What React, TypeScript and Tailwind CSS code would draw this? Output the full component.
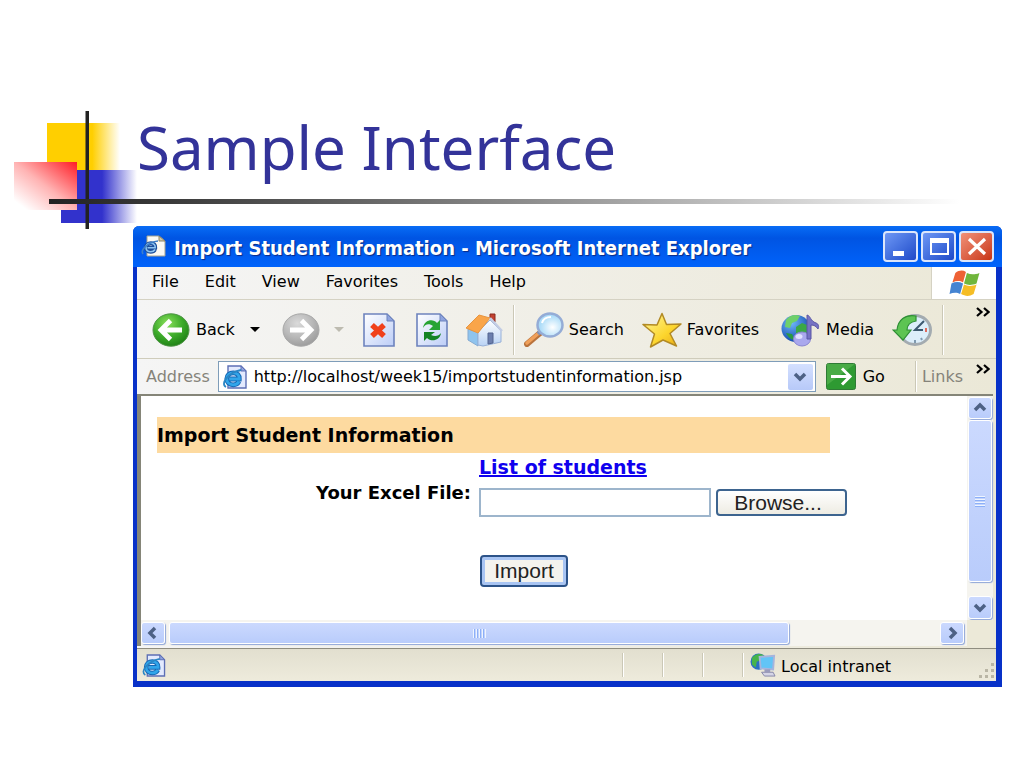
import React from 'react';

function PageIcon({ className }: { className: string }) {
  return (
    <svg viewBox="0 0 26 24" className={className} aria-hidden="true">
      <path d="M6 1h13l5 5v17H6z" fill="#e3eafe" stroke="#5d6fb5" strokeWidth="1.400" />
      <path d="M19 1v5h5z" fill="#8fa4df" stroke="#5d6fb5" />
      <path d="M17 16.500c-1.200 2.300-3.200 3.300-5.800 3.300-4 0-6.400-2.500-6.400-6s2.700-6 6.500-6 6.200 2.500 6 6.200H7.500" fill="none" stroke="#1668b4" strokeWidth="4.800" />
      <path d="M17 16.500c-1.200 2.300-3.200 3.300-5.800 3.300-4 0-6.400-2.500-6.400-6s2.700-6 6.500-6 6.200 2.500 6 6.200H7.500" fill="none" stroke="#31a5ea" strokeWidth="2.800" />
      <path d="M4 22C-2 19 6 7.500 19 5" fill="none" stroke="#2b86c4" strokeWidth="1.800" />
    </svg>
  );
}

function WindowIcon() {
  return (
    <svg viewBox="0 0 26 24" className="h-[24px] w-[26px]" aria-hidden="true">
      <path d="M6 1h12l6 5v15H6z" fill="#fbfaf4" stroke="#a7a48f" />
      <path d="M18 1v5h6z" fill="#d3c8a4" stroke="#8c8569" />
      <path d="M14 14.500c-1 1.700-2.600 2.300-4.400 2.300-2.900 0-4.600-1.700-4.600-4.200s2-4.300 4.900-4.300 4.600 1.700 4.300 4.500H6.500" fill="none" stroke="#1c4f9c" strokeWidth="4" />
      <path d="M14 14.500c-1 1.700-2.600 2.300-4.400 2.300-2.900 0-4.600-1.700-4.600-4.200s2-4.300 4.900-4.300 4.600 1.700 4.300 4.500H6.500" fill="none" stroke="#8cc4f2" strokeWidth="1.600" />
      <path d="M2 19C-1 15 7 7 17 6" fill="none" stroke="#3d7fc8" strokeWidth="1.600" />
    </svg>
  );
}

function Circle({ dir }: { dir: 'back' | 'forward' }) {
  const back = dir === 'back';
  return (
    <svg viewBox="0 0 38 34" className="h-[34px] w-[38px]" aria-hidden="true" preserveAspectRatio="none">
      <defs>
        <radialGradient id={back ? 'gb' : 'gf'} cx="40%" cy="30%" r="75%">
          <stop offset="0" stopColor={back ? '#8be05c' : '#dadada'} />
          <stop offset=".55" stopColor={back ? '#3cab2a' : '#b9b9b9'} />
          <stop offset="1" stopColor={back ? '#1d7d14' : '#999'} />
        </radialGradient>
      </defs>
      <ellipse cx="19" cy="17" rx="18" ry="16.200" fill={back ? 'url(#gb)' : 'url(#gf)'} stroke={back ? '#4f9446' : '#a8a8a8'} />
      <path d={back ? 'M18.500 7.500L9 17l9.500 9.500M10 17h20' : 'M19.500 7.500L29 17l-9.500 9.500M28 17H8'} fill="none" stroke="#fff" strokeWidth="4.800" />
    </svg>
  );
}

function Sheet({ children }: { children: React.ReactNode }) {
  return (
    <svg viewBox="0 0 32 34" className="h-[34px] w-[32px]" aria-hidden="true">
      <defs>
        <linearGradient id="sheet" x1="0" y1="0" x2="1" y2="1">
          <stop offset="0" stopColor="#fff" />
          <stop offset="1" stopColor="#bccdf7" />
        </linearGradient>
      </defs>
      <path d="M1 1h23l7 7v25H1z" fill="url(#sheet)" stroke="#6d83bd" strokeWidth="1.600" />
      <path d="M24 1v7h7z" fill="#8fa4df" stroke="#6d83bd" />
      {children}
    </svg>
  );
}

function HomeIcon() {
  return (
    <svg viewBox="0 0 38 35" className="h-[35px] w-[38px]" aria-hidden="true">
      <defs>
        <linearGradient id="wall" x1="0" y1="0" x2="0" y2="1">
          <stop offset="0" stopColor="#fff" />
          <stop offset="1" stopColor="#b9d3f5" />
        </linearGradient>
      </defs>
      <path d="M3 17l10 3v14L3 28z" fill="#8fc4ee" stroke="#86abd2" />
      <path d="M13 20l12-12 11 11v11l-18 4-5-1z" fill="url(#wall)" stroke="#98b1d8" />
      <path d="M25 2h5v8l-5-3z" fill="#c2412f" stroke="#8a2a20" />
      <path d="M1 16L14 3l11 3-12 15z" fill="#f9a54a" stroke="#e8953f" />
      <path d="M25 6l12 13" stroke="#c3cde4" strokeWidth="2.500" />
      <path d="M23 21h5v10l-5 1z" fill="#6c7fae" stroke="#53658f" />
    </svg>
  );
}

function SearchIcon() {
  return (
    <svg viewBox="0 0 40 35" className="h-[35px] w-[40px]" aria-hidden="true">
      <defs>
        <radialGradient id="lens" cx="60%" cy="60%">
          <stop offset="0" stopColor="#fff" />
          <stop offset="1" stopColor="#acdcf8" />
        </radialGradient>
      </defs>
      <path d="M3 32l13-11" stroke="#b9733c" strokeWidth="6" strokeLinecap="round" />
      <path d="M3 31l13-11" stroke="#f0a05a" strokeWidth="3.500" strokeLinecap="round" />
      <path d="M14 22l4-4" stroke="#8190b5" strokeWidth="4" />
      <ellipse cx="26" cy="13" rx="12.500" ry="11.500" fill="url(#lens)" stroke="#94acd6" strokeWidth="2.500" />
      <path d="M18 11c1-4 5-6 9-6" stroke="#fff" strokeWidth="2" fill="none" />
    </svg>
  );
}

function StarIcon() {
  return (
    <svg viewBox="0 0 40 36" className="h-[36px] w-[40px]" aria-hidden="true">
      <defs>
        <linearGradient id="star" x1="0" y1="0" x2="1" y2="1">
          <stop offset="0" stopColor="#fff8a0" />
          <stop offset=".6" stopColor="#fcd52d" />
          <stop offset="1" stopColor="#e6a514" />
        </linearGradient>
      </defs>
      <path d="M20 1.500l4.500 11 14.500-.5-11 9.500 6.500 12.500-13.500-6-12.500 7 4-13L1 12.500l14 .5z" fill="url(#star)" stroke="#b28a24" strokeWidth="1.500" strokeLinejoin="round" />
    </svg>
  );
}

function MediaIcon() {
  return (
    <svg viewBox="0 0 40 34" className="h-[34px] w-[40px]" aria-hidden="true">
      <defs>
        <radialGradient id="globe" cx="35%" cy="30%" r="75%">
          <stop offset="0" stopColor="#6fb7fa" />
          <stop offset="1" stopColor="#0c43a8" />
        </radialGradient>
      </defs>
      <ellipse cx="15" cy="15.500" rx="14.500" ry="13.500" fill="url(#globe)" />
      <path d="M5 7c4-5 9-6 14-4l-3 5-5 2-2 5-5-1z" fill="#6fd06a" />
      <path d="M15 14l6-4 5 2v9l-6 3-5-4z" fill="#3aa846" />
      <path d="M5 20l6 1 3 6c-4 0-7-3-9-7z" fill="#2a9a40" />
      <ellipse cx="21" cy="26" rx="8.500" ry="7" fill="#aaa8ed" stroke="#8a87d0" />
      <ellipse cx="18" cy="23.500" rx="3.500" ry="2.500" fill="#e1e0ff" />
      <path d="M26 26V2c4 1 3 6 9 8 3 1 3 4 2 6-2-3-4-4-7-4v14z" fill="#7773c4" stroke="#5a56a6" />
    </svg>
  );
}

function HistoryIcon() {
  return (
    <svg viewBox="0 0 40 34" className="h-[34px] w-[40px]" aria-hidden="true">
      <ellipse cx="23" cy="17" rx="15.500" ry="14.500" fill="#dceefa" stroke="#a3abb0" strokeWidth="3" />
      <path d="M32 8l-9 9h8" fill="none" stroke="#3c5970" strokeWidth="2" />
      <path d="M34 15v4" stroke="#e06a5c" strokeWidth="2" />
      <path d="M23 27v3M29 25l1 2" stroke="#7f9ab0" strokeWidth="2" />
      <path d="M24 3C13 1 6 7 5 17H1l10 10 8-10h-4c0-5 3-8 9-9z" fill="#5dc453" stroke="#2e8e35" strokeWidth="1.200" />
    </svg>
  );
}

function Flag() {
  return (
    <svg viewBox="0 0 34 28" className="h-[27px] w-[34px]" aria-hidden="true">
      <path d="M8 3c4-3 8-3 11-1l-3 11c-3-2-7-2-11 0z" fill="#ee6135" />
      <path d="M20 3c4 2 8 2 13 0l-3 11c-5 2-9 2-13 0z" fill="#70b63c" />
      <path d="M4 14c4-2 8-2 12 0l-3 11c-3-2-7-2-11 0z" fill="#4584d2" />
      <path d="M17 15c4 2 8 2 13 0l-3 10c-5 3-9 2-13 0z" fill="#f5bd25" />
    </svg>
  );
}

function IntranetIcon() {
  return (
    <svg viewBox="0 0 28 26" className="h-[25px] w-[27px] shrink-0" aria-hidden="true">
      <circle cx="9" cy="9" r="8.500" fill="#2a6fc4" />
      <path d="M2 5c3-4 8-5 12-3l-2 5-5 2-1 6-4-3z" fill="#46b44b" />
      <path d="M10 4l15-1-1 14-13-1z" fill="#62c4f6" stroke="#a6b4dc" strokeWidth="2" />
      <path d="M12 20h12l2 4H15z" fill="#d5d5e6" stroke="#8586a8" />
      <path d="M15 17h6v3h-6z" fill="#9a9bbb" />
    </svg>
  );
}

function Chevron({ d }: { d: string }) {
  return (
    <svg viewBox="0 0 16 16" className="h-4 w-4" aria-hidden="true">
      <path d={d} fill="none" stroke="#4d6185" strokeWidth="3.500" />
    </svg>
  );
}

function More() {
  return (
    <svg viewBox="0 0 14 10" className="h-[10px] w-[14px]" aria-hidden="true">
      <path d="M1 1l4.500 4L1 9M8 1l4.500 4L8 9" fill="none" stroke="#000" strokeWidth="2.200" />
    </svg>
  );
}

const scrollPart =
  'flex items-center justify-center rounded-[3px] border border-white bg-linear-to-b from-[#cbd9fe] to-[#b9ccfb] shadow-[1px_1px_1px_#8fa6d8]';
const caption = 'flex h-[31px] w-[35px] items-center justify-center rounded-[4px] border-2 border-[#dbe6fb]';

function Divider() {
  return <div className="h-6 w-[2px] border-l border-[#cbc8b6] bg-white" />;
}

function Header() {
  return (
    <header className="grid h-[226px]">
      <svg viewBox="0 0 140 230" className="col-start-1 row-start-1 h-[230px] w-[140px]" aria-hidden="true">
        <defs>
          <linearGradient id="yel"><stop offset=".62" stopColor="#ffcf00" /><stop offset="1" stopColor="#fff" /></linearGradient>
          <linearGradient id="blu"><stop offset=".54" stopColor="#3232cc" /><stop offset="1" stopColor="#fff" /></linearGradient>
          <linearGradient id="red" x1="1" y1="0" x2="0" y2="1">
            <stop offset="0" stopColor="#ff1c25" /><stop offset=".5" stopColor="#ffb4b4" /><stop offset=".9" stopColor="#fff" />
          </linearGradient>
        </defs>
        <rect x="47" y="123" width="73" height="47" fill="url(#yel)" />
        <rect x="61" y="170" width="76" height="53" fill="url(#blu)" />
        <rect x="14" y="162" width="63" height="48" fill="url(#red)" />
        <rect x="85.500" y="111" width="3.500" height="118" fill="#222" />
      </svg>
      <div className="col-start-1 row-start-1 mr-16 mb-[26px] ml-[49px] h-[5px] self-end bg-linear-to-r from-[#222] to-white" />
      <h1 className="col-start-1 row-start-1 mb-[43px] self-end pl-[137px] font-['Noto_Sans',sans-serif] text-[60px] leading-[80px] font-normal text-[#333399]">
        Sample Interface
      </h1>
    </header>
  );
}

function TitleBar() {
  return (
    <div className="-mr-[6px] -ml-1 flex h-[41px] items-center gap-[7px] rounded-t-[6px] bg-linear-to-b from-[#0a6cf5] via-[#0054e3] via-30% to-[#0063fb] pr-2 pl-2">
      <WindowIcon />
      <h2 className="grow pt-[3px] font-['DejaVu_Sans_Condensed','DejaVu_Sans',sans-serif] text-[20px] font-bold whitespace-nowrap text-white [text-shadow:1px_1px_1px_#0a2a85]">
        Import Student Information - Microsoft Internet Explorer
      </h2>
      <div className="flex gap-[3px]">
        <button aria-label="Minimize" className={caption + ' bg-linear-to-br from-[#6e97f5] to-[#1f48c8]'}>
          <svg viewBox="0 0 30 27" className="h-[27px] w-[30px]"><path d="M7 18h11v5H7z" fill="#fff" /></svg>
        </button>
        <button aria-label="Maximize" className={caption + ' bg-linear-to-br from-[#6e97f5] to-[#1f48c8]'}>
          <svg viewBox="0 0 30 27" className="h-[27px] w-[30px]"><path d="M7 7h17v14H7z" fill="none" stroke="#fff" strokeWidth="2" /><path d="M6 5h19v5H6z" fill="#fff" /></svg>
        </button>
        <button aria-label="Close" className={caption + ' bg-linear-to-br from-[#f09078] to-[#c8320f]'}>
          <svg viewBox="0 0 30 27" className="h-[27px] w-[30px]"><path d="M7 6l16 15M23 6L7 21" stroke="#fff" strokeWidth="3.200" /></svg>
        </button>
      </div>
    </div>
  );
}

function MenuBar() {
  return (
    <div className="flex h-[33px] border-b border-[#d5d2c3]">
      <nav className="flex grow items-start gap-[26px] pt-[3px] pl-[15px] leading-6">
        {['File', 'Edit', 'View', 'Favorites', 'Tools', 'Help'].map((m) => (
          <button key={m}>{m}</button>
        ))}
      </nav>
      <div className="flex w-[65px] items-center justify-center border-l border-[#d5d2c3] bg-white"><Flag /></div>
    </div>
  );
}

function ToolBar() {
  return (
    <div className="flex h-[59px] items-center border-b border-[#cfccbb] pt-px pl-[15px]">
      <button className="flex items-center gap-[6px]"><Circle dir="back" />Back</button>
      <svg viewBox="0 0 10 5" className="ml-[15px] h-[5px] w-[10px]"><path d="M0 0h10L5 5z" /></svg>
      <button aria-label="Forward" className="ml-[22px]"><Circle dir="forward" /></button>
      <svg viewBox="0 0 10 5" className="ml-[14px] h-[5px] w-[10px]"><path d="M0 0h10L5 5z" fill="#bdbbb0" /></svg>
      <button aria-label="Stop" className="ml-[19px]">
        <Sheet><path d="M9 12l12 11M21 12L9 23" stroke="#f0401c" strokeWidth="5.500" /></Sheet>
      </button>
      <button aria-label="Refresh" className="ml-[21px]">
        <Sheet>
          <path d="M7 15C8 7 17 5 21 10l3-3v10H13l4-4c-4-3-8-2-10 2z" fill="#27a434" />
          <path d="M25 20c-1 8-10 9-14 5l-3 3V19h11l-4 3c4 2 8 1 10-2z" fill="#148324" />
        </Sheet>
      </button>
      <button aria-label="Home" className="ml-[17px]"><HomeIcon /></button>
      <div className="ml-[10px] h-[50px] w-[2px] border-l border-[#cbc8b6] bg-white" />
      <button className="ml-[9px] flex items-center gap-[5px]"><SearchIcon />Search</button>
      <button className="ml-[18px] flex items-center gap-[5px]"><StarIcon />Favorites</button>
      <button className="ml-[22px] flex items-center gap-[5px]"><MediaIcon />Media</button>
      <button aria-label="History" className="ml-[18px]"><HistoryIcon /></button>
      <div className="ml-[10px] h-[50px] w-[2px] border-l border-[#cbc8b6] bg-white" />
      <button aria-label="More tools" className="mt-[6px] mr-[6px] ml-auto self-start"><More /></button>
    </div>
  );
}

function AddressBar() {
  return (
    <div className="flex h-[35px] items-center pl-[9px]">
      <label htmlFor="address" className="text-[#85837a]">Address</label>
      <div className="ml-[8px] flex h-[31px] min-w-0 grow items-center border border-[#7f9db9] bg-white pl-[3px]">
        <PageIcon className="h-[24px] w-[26px] shrink-0" />
        <input id="address" className="ml-[6px] min-w-0 grow bg-white outline-none" defaultValue="http://localhost/week15/importstudentinformation.jsp" />
        <button aria-label="Show addresses" className="mr-[2px] flex h-[26px] w-[25px] items-center justify-center rounded-[2px] bg-linear-to-b from-[#d4e0ff] to-[#b7c9f8]">
          <Chevron d="M3 5l5 5 5-5" />
        </button>
      </div>
      <button className="ml-[10px] flex items-center gap-[7px]">
        <svg viewBox="0 0 30 27" className="h-[27px] w-[30px]" aria-hidden="true">
          <rect x=".5" y=".5" width="29" height="26" rx="2" fill="#2e9a32" stroke="#2f7a35" />
          <path d="M1 1h28L1 22z" fill="#64bb59" opacity=".5" />
          <path d="M5 13.500h18M16 5.500l8 8-8 8" fill="none" stroke="#fff" strokeWidth="3" />
        </svg>
        Go
      </button>
      <div className="ml-[30px] h-[31px] w-[2px] border-l border-[#cbc8b6] bg-white" />
      <span className="ml-[5px] text-[#85837a]">Links</span>
      <button aria-label="More links" className="mt-[5px] mr-[6px] ml-[13px] self-start"><More /></button>
    </div>
  );
}

function ImportForm() {
  return (
    <form className="min-w-0 grow bg-white pt-[21px] pl-[16px] font-['DejaVu_Sans',sans-serif] text-[19px] font-bold">
      <h3 className="mr-[137px] h-[36px] bg-[#fddaa0] leading-[36px]">Import Student Information</h3>
      <div className="grid grid-cols-[314px_auto] items-start gap-x-[8px]">
        <a href="#students" className="col-start-2 h-[35px] justify-self-start leading-7 text-[#0f00ee] underline decoration-2">List of students</a>
        <label htmlFor="file" className="col-start-1 text-right text-[18px] leading-[10px]">Your Excel File:</label>
        <div className="flex items-center gap-[5px]">
          <input id="file" type="text" className="h-[29px] w-[232px] border-2 border-[#9db5cc] bg-white px-1 text-[16px] font-normal outline-none" />
          <button type="button" className="h-[27px] w-[131px] rounded-[4px] border-2 border-[#3d648f] bg-linear-to-b from-white to-[#eeece3] pr-[7px] text-center font-['Liberation_Sans',sans-serif] text-[21px] leading-5 font-normal text-[#222]">
            Browse...
          </button>
        </div>
        <button type="submit" className="col-start-2 mt-[38px] ml-px h-[32px] w-[88px] rounded-[4px] border-2 border-[#2c5389] bg-[#f4f3ee] font-['Liberation_Sans',sans-serif] text-[21px] leading-5 font-normal text-[#222] shadow-[inset_0_0_0_3px_#a9c5f3]">
          Import
        </button>
      </div>
    </form>
  );
}

function Viewport() {
  return (
    <div className="mr-[3px] flex h-[252px] flex-col border-t-2 border-l-4 border-[#858578]">
      <div className="flex min-h-0 grow">
        <ImportForm />
        <div className="flex w-[26px] shrink-0 flex-col items-center bg-[#f5f4ef] pt-px">
          <button aria-label="Scroll up" className={scrollPart + ' h-[22px] w-[24px]'}><Chevron d="M3 10l5-5 5 5" /></button>
          <div className={scrollPart + ' mt-px h-[162px] w-[24px]'}>
            <div className="h-[11px] w-[10px] bg-[repeating-linear-gradient(#eef4fe_0_1px,#8cb0f8_1px_2px,transparent_2px_3px)]" />
          </div>
          <button aria-label="Scroll down" className={scrollPart + ' mt-auto mb-px h-[23px] w-[24px]'}><Chevron d="M3 5l5 5 5-5" /></button>
        </div>
      </div>
      <div className="flex h-[26px] shrink-0 items-center bg-[#f5f4ef]">
        <button aria-label="Scroll left" className={scrollPart + ' h-[22px] w-[24px]'}><Chevron d="M10 3L5 8l5 5" /></button>
        <div className="flex grow">
          <div className={scrollPart + ' ml-[4px] h-[22px] w-[80%]'}>
            <div className="h-[9px] w-[13px] bg-[repeating-linear-gradient(90deg,#eef4fe_0_1px,#8cb0f8_1px_2px,transparent_2px_3px)]" />
          </div>
        </div>
        <button aria-label="Scroll right" className={scrollPart + ' mr-[3px] h-[22px] w-[24px]'}><Chevron d="M6 3l5 5-5 5" /></button>
        <div className="h-full w-[26px] bg-[#ece9d8]" />
      </div>
    </div>
  );
}

function StatusBar() {
  return (
    <footer className="mt-[2px] flex h-[33px] items-center border-t border-[#8f8d80] bg-linear-to-b from-[#e2dfcf] to-[#eeebdc] pl-1">
      <PageIcon className="h-[23px] w-[26px]" />
      <div className="ml-auto flex items-center gap-[38px]">
        <Divider /><Divider /><Divider /><Divider />
      </div>
      <div className="flex w-[252px] items-center gap-1 pl-[6px]">
        <IntranetIcon />
        <span className="grow pt-[3px] leading-6 whitespace-nowrap">Local intranet</span>
        <svg viewBox="0 0 18 16" className="h-4 w-[18px] self-end" aria-hidden="true">
          <path d="M13 0h3v3h-3zM7 6h3v3H7zM13 6h3v3h-3zM1 12h3v3H1zM7 12h3v3H7zM13 12h3v3h-3z" fill="#bab6a5" />
        </svg>
      </div>
    </footer>
  );
}

export default function App() {
  return (
    <main className="min-h-screen bg-white pb-20">
      <Header />
      <section className="relative mr-[22px] ml-[133px] rounded-t-[6px] border-r-[6px] border-b-[6px] border-l-4 border-[#0831c8] bg-linear-to-r from-[#f5f5f5] to-[#ebe8d7] font-['DejaVu_Sans',sans-serif] text-[16px] leading-6 text-black">
        <TitleBar />
        <MenuBar />
        <ToolBar />
        <AddressBar />
        <Viewport />
        <StatusBar />
      </section>
    </main>
  );
}
